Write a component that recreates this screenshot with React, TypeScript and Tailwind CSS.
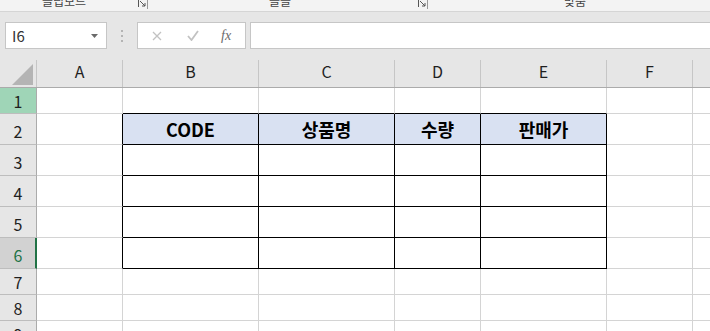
import React from "react";

const FONT = { fontFamily: '"Noto Sans CJK KR", "Noto Sans", sans-serif' };

const cols = [
  { l: "A", w: "w-[86px]" },
  { l: "B", w: "w-[136px]" },
  { l: "C", w: "w-[136px]" },
  { l: "D", w: "w-[86px]" },
  { l: "E", w: "w-[126px]" },
  { l: "F", w: "w-[86px]" },
  { l: "G", w: "w-[86px]" },
];

const rows = [
  { n: 1, h: "h-[26px]" },
  { n: 2, h: "h-[31px]" },
  { n: 3, h: "h-[31px]" },
  { n: 4, h: "h-[31px]" },
  { n: 5, h: "h-[31px]" },
  { n: 6, h: "h-[31px]" },
  { n: 7, h: "h-[26px]" },
  { n: 8, h: "h-[26px]" },
  { n: 9, h: "h-[26px]" },
];

const headers: Record<number, string> = { 1: "CODE", 2: "상품명", 3: "수량", 4: "판매가" };

function Launcher() {
  return (
    <svg width="12" height="9" viewBox="0 0 12 9" className="shrink-0">
      <path d="M1.5 0 V7" stroke="#555" strokeWidth="1" />
      <path d="M3 1 L8 6 M8 3 V6 H5" stroke="#555" strokeWidth="1" fill="none" />
      <path d="M10.5 0 V9" stroke="#999" strokeWidth="1" />
    </svg>
  );
}

function RowHeader({ n, h }: { n: number; h: string }) {
  if (n === 1) {
    return (
      <div className={`${h} w-[37px] shrink-0 bg-[#9fd5b7] border-r border-b border-r-[#ababab] border-b-[#bdbdbd] flex items-end justify-center pb-[1px] text-[16px] leading-[22px] text-[#1f1f1f]`}>
        {n}
      </div>
    );
  }
  if (n === 6) {
    return (
      <div className={`${h} w-[37px] shrink-0 bg-[#d2d2d2] border-r-2 border-b border-r-[#217346] border-b-[#bdbdbd] flex items-end justify-center pl-[1px] pb-[2px] text-[16px] leading-[22px] text-[#217346]`}>
        {n}
      </div>
    );
  }
  return (
    <div className={`${h} w-[37px] shrink-0 bg-[#e6e6e6] border-r border-b border-r-[#ababab] border-b-[#bdbdbd] flex items-end justify-center ${h === "h-[26px]" ? "pb-[1px]" : "pb-[2px]"} text-[16px] leading-[22px] text-[#1f1f1f]`}>
      {n}
    </div>
  );
}

function Cell({ r, c, h, w }: { r: number; c: number; h: string; w: string }) {
  const inTableRow = r >= 2 && r <= 6;
  const rightBlack = inTableRow && c <= 4;
  const bottomBlack = r >= 1 && r <= 6 && c >= 1 && c <= 4;
  const isHead = r === 2 && c >= 1 && c <= 4;
  return (
    <div
      className={`${h} ${w} shrink-0 border-r border-b ${rightBlack ? "border-r-black" : "border-r-[#d4d4d4]"} ${bottomBlack ? "border-b-black" : "border-b-[#d4d4d4]"} ${isHead ? "bg-[#d9e1f2]" : "bg-white"} flex items-center justify-center text-[18px] leading-[24px] font-bold text-black`}
    >
      {isHead ? headers[c] : null}
    </div>
  );
}

export default function App() {
  return (
    <div className="w-[710px] h-[331px] overflow-hidden bg-white select-none" style={FONT}>
      {/* Ribbon group labels (cut off) */}
      <div className="h-[12px] bg-[#f3f3f3] border-b border-[#d5d5d5] flex items-start overflow-hidden text-[12px] leading-[12px] text-[#444]">
        <div className="w-[151px] shrink-0 flex items-start">
          <span className="ml-[42px] -mt-[5px] w-[48px]">클립보드</span>
          <div className="ml-[47px]"><Launcher /></div>
        </div>
        <div className="w-[279px] shrink-0 flex items-start">
          <span className="ml-[118px] -mt-[5px] w-[24px]">글꼴</span>
          <div className="ml-[124px]"><Launcher /></div>
        </div>
        <div className="flex items-start">
          <span className="ml-[134px] -mt-[5px]">맞춤</span>
        </div>
      </div>

      {/* Formula bar */}
      <div className="bg-[#e6e6e6] pt-[10px] pb-[11px] flex items-center">
        <div className="ml-[5px] w-[102px] h-[27px] shrink-0 bg-white border border-[#c6c6c6] flex items-center pl-[6px] pr-[8px]">
          <span className="text-[15px] text-[#333] leading-none">I6</span>
          <svg width="7" height="4" viewBox="0 0 7 4" className="ml-auto">
            <path d="M0 0 H7 L3.5 4 Z" fill="#6a6a6a" />
          </svg>
        </div>
        <div className="ml-[14px] w-[2px] flex flex-col gap-[3px] shrink-0">
          <div className="w-[2px] h-[2px] bg-[#b4b4b4]" />
          <div className="w-[2px] h-[2px] bg-[#b4b4b4]" />
          <div className="w-[2px] h-[2px] bg-[#b4b4b4]" />
        </div>
        <div className="ml-[14px] w-[109px] h-[27px] shrink-0 bg-white border border-[#c6c6c6] flex items-center">
          <svg width="10" height="10" viewBox="0 0 10 10" className="ml-[14px]">
            <path d="M1 1 L9 9 M9 1 L1 9" stroke="#c2c2c2" strokeWidth="1.3" />
          </svg>
          <svg width="12" height="11" viewBox="0 0 12 11" className="ml-[25px]">
            <path d="M1 6 L4.5 10 L11 1" stroke="#c2c2c2" strokeWidth="1.8" fill="none" />
          </svg>
          <span
            className="ml-[22px] text-[14px] italic text-[#6b6b6b] leading-none"
            style={{ fontFamily: '"Liberation Serif", serif' }}
          >
            fx
          </span>
        </div>
        <div className="ml-[4px] flex-1 h-[27px] bg-white border border-r-0 border-[#c6c6c6]" />
      </div>

      {/* Column header row */}
      <div className="flex h-[28px] bg-[#e6e6e6] border-b border-[#ababab]">
        <div className="w-[37px] shrink-0 border-r border-[#c6c6c6] flex items-end justify-end pr-[3px] pb-[2px]">
          <svg width="21" height="21" viewBox="0 0 21 21">
            <path d="M21 0 V21 H0 Z" fill="#b4b4b4" />
          </svg>
        </div>
        {cols.map((c) => (
          <div
            key={c.l}
            className={`${c.w} shrink-0 border-r border-[#c6c6c6] flex items-center justify-center pb-[5px] text-[16px] text-[#1f1f1f]`}
          >
            {c.l}
          </div>
        ))}
      </div>

      {/* Grid */}
      {rows.map((row) => (
        <div key={row.n} className="flex">
          <RowHeader n={row.n} h={row.h} />
          {cols.map((c, ci) => (
            <Cell key={c.l} r={row.n} c={ci} h={row.h} w={c.w} />
          ))}
        </div>
      ))}
    </div>
  );
}
